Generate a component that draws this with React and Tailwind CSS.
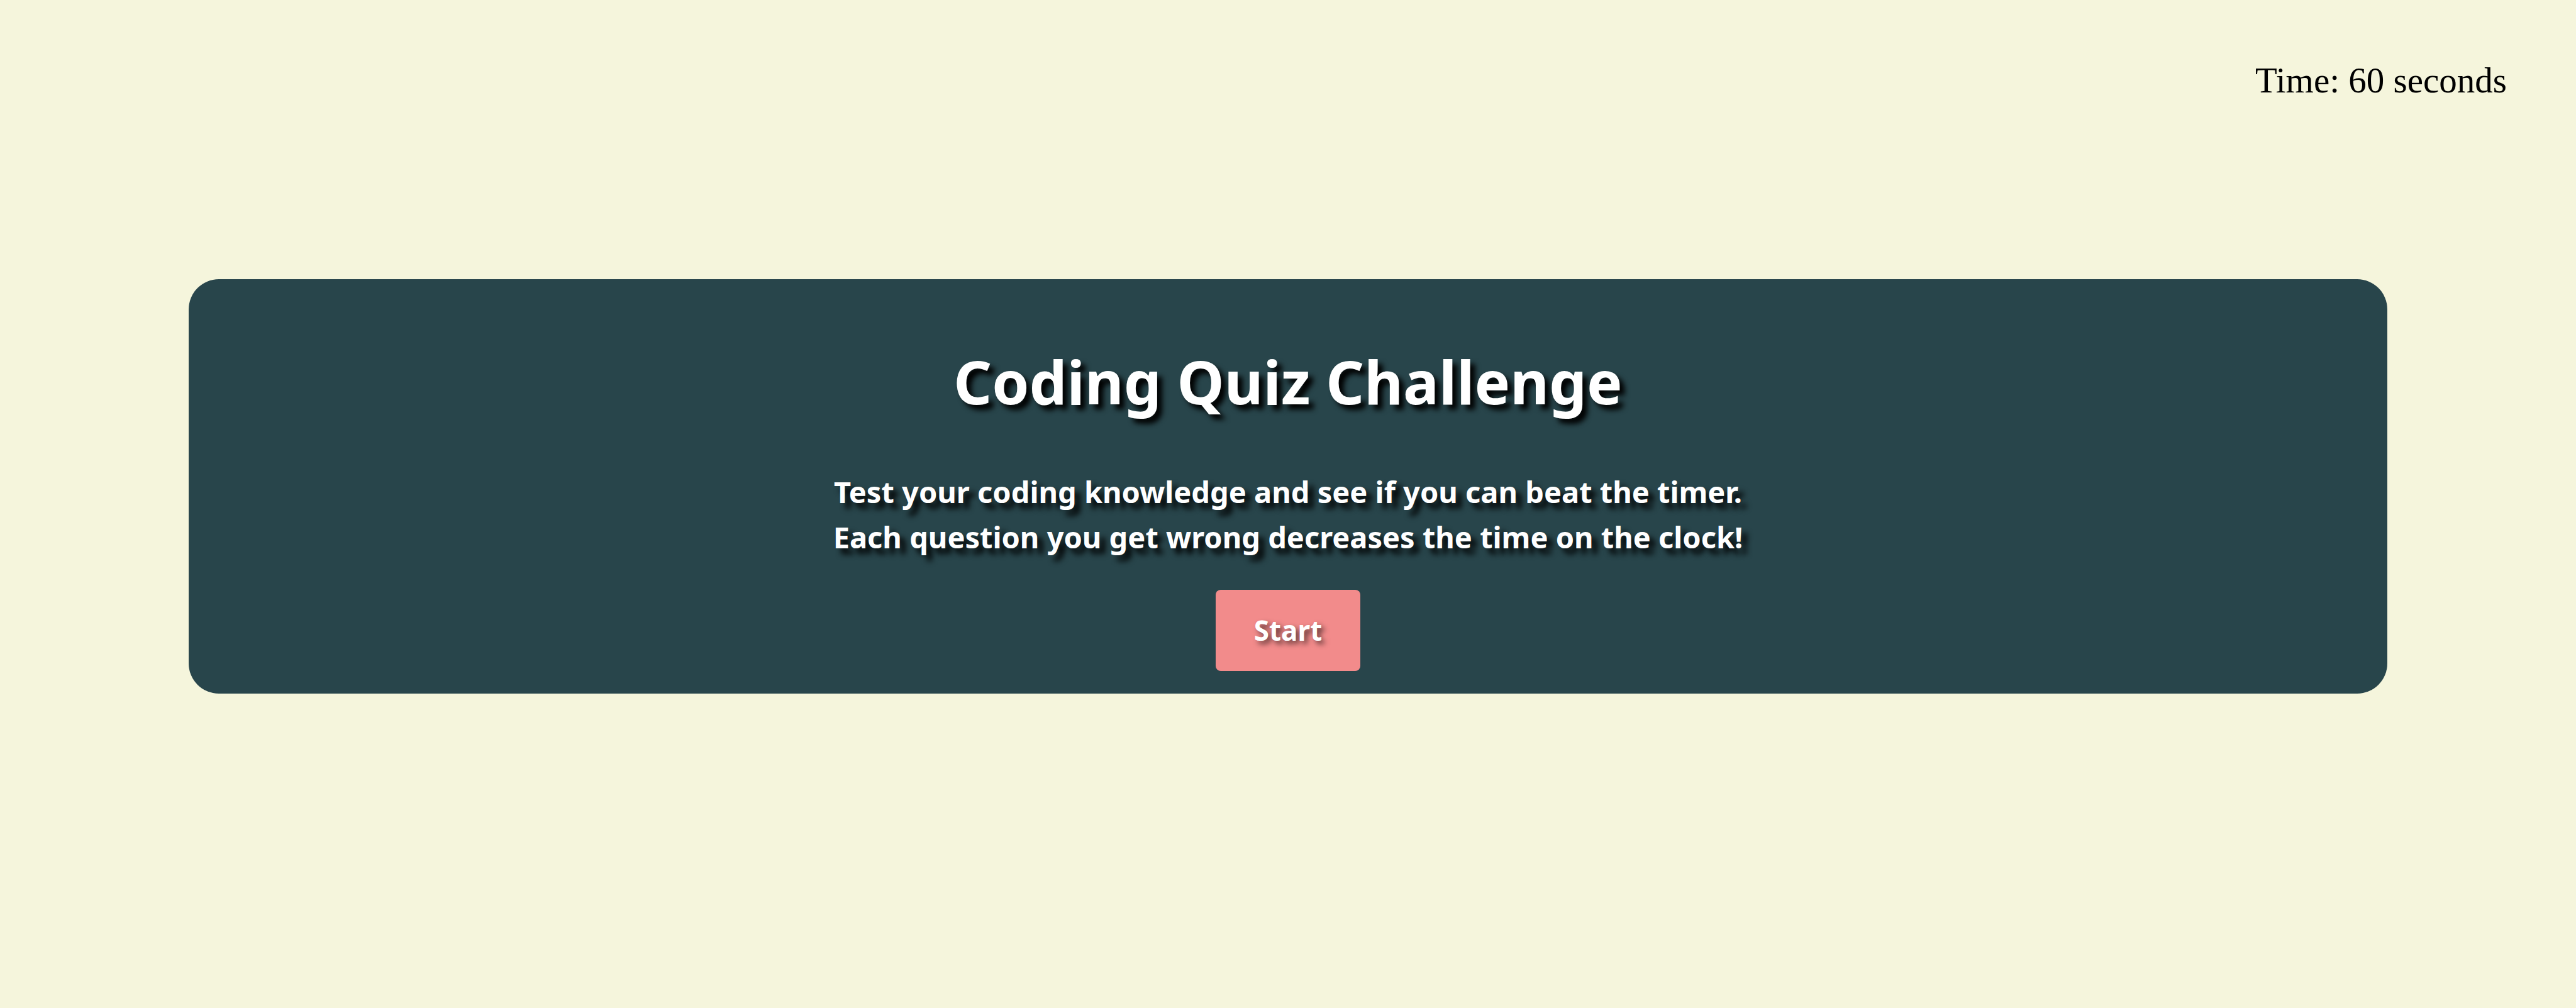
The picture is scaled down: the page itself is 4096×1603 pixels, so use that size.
export default function App() {
  return (
    <div className="flex min-h-screen flex-col bg-[#f5f5dc]">
      <header className="flex justify-end px-[110px] pt-24">
        <p className="font-['Liberation_Serif',serif] text-[57px] leading-[64px] text-black">
          Time: 60 seconds
        </p>
      </header>
      <main className="mx-[300px] mt-[284px] flex flex-col items-center rounded-[48px] bg-[#28454b] px-12 pt-[98px] pb-9 text-center font-['Noto_Sans',sans-serif] font-bold text-white">
        <h1 className="text-[95px] leading-[128px] [text-shadow:8px_8px_8px_#000]">
          Coding Quiz Challenge
        </h1>
        <p className="mt-[76px] text-[47px] leading-[72px] [text-shadow:9px_9px_10px_#000]">
          Test your coding knowledge and see if you can beat the timer.
          <br />
          Each question you get wrong decreases the time on the clock!
        </p>
        <button
          type="button"
          className="mt-12 rounded-lg bg-[#f28b8b] px-[61px] py-8 text-[44px] leading-[65px] [text-shadow:5px_5px_8px_rgba(0,0,0,0.6)]"
        >
          Start
        </button>
      </main>
    </div>
  );
}
